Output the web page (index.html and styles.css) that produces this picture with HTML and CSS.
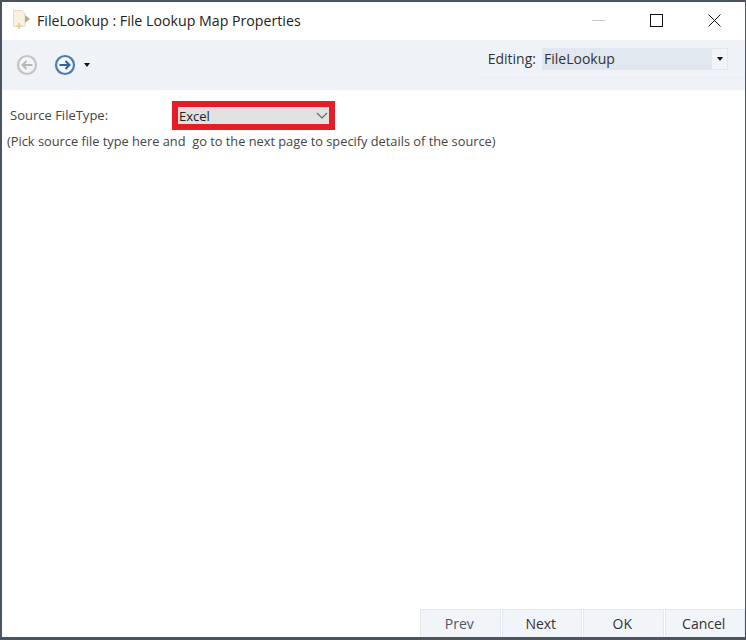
FILE: index.html
```html
<!DOCTYPE html>
<html lang="en">
<head>
<meta charset="utf-8">
<title>FileLookup : File Lookup Map Properties</title>
<link rel="stylesheet" href="styles.css">
</head>
<body>
<div class="window">
  <header class="titlebar">
    <svg class="app-icon" width="20" height="22" viewBox="0 0 20 22">
      <path d="M1.500 1.500h8.500l3 3v13H1.500z" fill="#f7f1de" stroke="#e0dccf"/>
      <path d="M13 6l5 4-5 4z" fill="#b9aa8c"/>
      <path d="M7 14v6M4.500 17h5" stroke="#f0cf9a" stroke-width="2"/>
    </svg>
    <span class="title">FileLookup : File Lookup Map Properties</span>
    <div class="controls">
      <svg class="ctl" width="13" height="13" viewBox="0 0 13 13"><path d="M0 6.500h13" stroke="#c8c8c8"/></svg>
      <svg class="ctl" width="13" height="13" viewBox="0 0 13 13"><rect x="0.500" y="0.500" width="12" height="12" fill="none" stroke="#111"/></svg>
      <svg class="ctl" width="13" height="13" viewBox="0 0 13 13"><path d="M0.500 0.500l12 12M12.500 0.500l-12 12" stroke="#111"/></svg>
    </div>
  </header>
  <div class="toolbar">
    <svg class="nav-icon" width="22" height="22" viewBox="0 0 22 22">
      <circle cx="11" cy="11" r="9" fill="#f2f4f5" stroke="#c4c4c4" stroke-width="2.200"/>
      <path d="M16.500 11H7M10.500 7l-4 4 4 4" fill="none" stroke="#b8b8b8" stroke-width="2"/>
    </svg>
    <svg class="nav-icon next" width="22" height="22" viewBox="0 0 22 22">
      <circle cx="11" cy="11" r="9" fill="#f4f7fa" stroke="#4a7cb5" stroke-width="2.200"/>
      <path d="M5.500 11H15M11.500 7l4 4-4 4" fill="none" stroke="#2f63a0" stroke-width="2"/>
    </svg>
    <span class="caret"></span>
    <div class="editing">
      <span class="editing-label">Editing:</span>
      <div class="editing-select">
        <span class="editing-value">FileLookup</span>
        <span class="editing-btn"><span class="caret small"></span></span>
      </div>
    </div>
  </div>
  <main class="content">
    <div class="row">
      <label class="field-label">Source FileType:</label>
      <div class="highlight">
        <div class="select">
          <span>Excel</span>
          <svg width="12" height="7" viewBox="0 0 12 7"><path d="M1 1l5 5 5-5" fill="none" stroke="#666" stroke-width="1.200"/></svg>
        </div>
      </div>
    </div>
    <p class="hint">(Pick source file type here and &nbsp;go to the next page to specify details of the source)</p>
  </main>
  <footer class="footer">
    <button class="btn muted">Prev</button>
    <button class="btn">Next</button>
    <button class="btn">OK</button>
    <button class="btn">Cancel</button>
  </footer>
</div>
</body>
</html>
```
FILE: styles.css
```css
* { box-sizing: border-box; }
html, body { margin: 0; height: 100%; background: #fff; }
body { font-family: "Open Sans", "Liberation Sans", sans-serif; }
.window {
  width: 746px; height: 640px;
  border: solid #4a5560; border-width: 2px 1px 3px 2px;
  display: flex; flex-direction: column; overflow: hidden; background: #fff;
}
.titlebar { height: 38px; flex: none; display: flex; align-items: center; padding-left: 10px; padding-bottom: 2px; }
.app-icon { flex: none; margin-right: 5px; }
.title { font-size: 14.200px; color: #222; }
.controls { margin-left: auto; display: flex; gap: 45px; padding-right: 24px; }
.ctl { display: block; }
.toolbar {
  height: 50px; flex: none; background: #eff3f7;
  display: flex; align-items: center; padding: 0 0 0 14px;
}
.nav-icon { flex: none; }
.nav-icon.next { margin-left: 16px; }
.caret {
  width: 0; height: 0; margin-left: 8px;
  border-left: 3.500px solid transparent; border-right: 3.500px solid transparent; border-top: 4px solid #111;
}
.caret.small { margin: 0; display: block; }
.editing {
  margin-left: auto; align-self: flex-start; margin-top: 8px;
  display: flex; align-items: center; gap: 6px;
  padding: 0 17px 7px 8px; border-bottom: 1px solid #e9eef3;
}
.editing-label { font-size: 14px; color: #333; margin-top: -2px; margin-left: -1px; }
.editing-select { width: 186px; height: 22px; background: #e0e7ee; display: flex; align-items: center; justify-content: space-between; }
.editing-value { font-size: 14px; color: #333; padding-left: 2px; margin-top: -1px; }
.editing-btn { width: 15px; height: 20px; background: #f2f5f8; display: flex; align-items: center; justify-content: center; margin-right: 1px; }
.content { flex: 1; padding: 11px 0 0 5px; min-height: 0; }
.row { display: flex; align-items: center; height: 29px; }
.field-label { font-size: 13px; color: #444; width: 165px; padding: 0 0 2px 3px; }
.highlight { width: 163px; height: 29px; border: 6px solid #e81c24; }
.select { height: 100%; background: #e1e1e1; display: flex; align-items: center; justify-content: space-between; padding: 0 1px 0 1px; font-size: 13px; color: #222; }
.hint { margin: 2px 0 0; font-size: 12.800px; color: #444; white-space: nowrap; }
.footer { flex: none; display: flex; justify-content: flex-end; gap: 1px; }
.btn {
  width: 80.500px; height: 28px; padding: 0 2px 0 0; border: 1px solid #e3e8ee; border-bottom: 0;
  background: #f1f4f8; font: 14px "Open Sans", "Liberation Sans", sans-serif; color: #333;
}
.btn.muted { color: #4f5862; }
```
